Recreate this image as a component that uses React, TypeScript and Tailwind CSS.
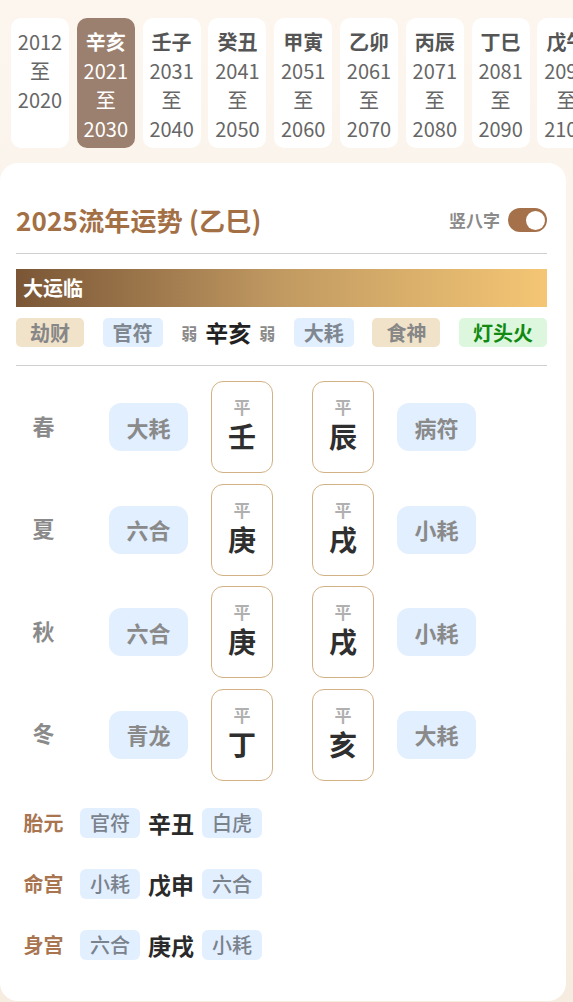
import React from 'react';

const tabs = [
  { gz: '', from: '2012', to: '2020' },
  { gz: '辛亥', from: '2021', to: '2030', active: true },
  { gz: '壬子', from: '2031', to: '2040' },
  { gz: '癸丑', from: '2041', to: '2050' },
  { gz: '甲寅', from: '2051', to: '2060' },
  { gz: '乙卯', from: '2061', to: '2070' },
  { gz: '丙辰', from: '2071', to: '2080' },
  { gz: '丁巳', from: '2081', to: '2090' },
  { gz: '戊午', from: '2091', to: '2100' },
];

const seasons = [
  { name: '春', left: '大耗', a: '壬', b: '辰', right: '病符' },
  { name: '夏', left: '六合', a: '庚', b: '戌', right: '小耗' },
  { name: '秋', left: '六合', a: '庚', b: '戌', right: '小耗' },
  { name: '冬', left: '青龙', a: '丁', b: '亥', right: '大耗' },
];

const palaces = [
  { name: '胎元', left: '官符', gz: '辛丑', right: '白虎' },
  { name: '命宫', left: '小耗', gz: '戊申', right: '六合' },
  { name: '身宫', left: '六合', gz: '庚戌', right: '小耗' },
];

function PillarCard({ ch }: { ch: string }) {
  return (
    <div className="w-[62px] h-[92px] shrink-0 rounded-[12px] border border-[#d2b184] bg-white flex flex-col items-center pt-[15px]">
      <div className="text-[17px] leading-[20px] font-bold text-[#b0b0b0]">平</div>
      <div className="text-[28px] leading-[36px] font-bold text-[#2f2f2f] mt-[1px]">{ch}</div>
    </div>
  );
}

function BigTag({ text }: { text: string }) {
  return (
    <div className="w-[79px] h-[48px] shrink-0 rounded-[12px] bg-[#e2efff] flex items-center justify-center text-[22px] font-bold text-[#8a8a8a]">
      {text}
    </div>
  );
}

function SmallTag({ text }: { text: string }) {
  return (
    <div className="h-[30px] px-[10px] rounded-[6px] bg-[#e2efff] flex items-center text-[20px] font-medium text-[#7a828c]">
      {text}
    </div>
  );
}

export default function App() {
  return (
    <div className="min-h-screen bg-gradient-to-b from-[#fcf6ef] to-[#f6ece0] font-['Noto_Sans_CJK_SC','Noto_Sans',sans-serif] overflow-hidden">
      <div className="flex gap-[7.8px] pl-[11px] pt-[18px] overflow-hidden">
        {tabs.map((t, i) => (
          <div
            key={i}
            className={`w-[58px] h-[130px] shrink-0 rounded-[10px] flex flex-col items-center pt-[9px] text-[20px] leading-[29px] ${
              t.active ? 'bg-[#9b7f6f] text-white' : 'bg-white text-[#666]'
            }`}
          >
            {t.gz && (
              <div className={`font-bold ${t.active ? 'text-white' : 'text-[#555]'}`}>{t.gz}</div>
            )}
            <div>{t.from}</div>
            <div>至</div>
            <div>{t.to}</div>
          </div>
        ))}
      </div>

      <div className="w-[566px] mt-[15px] bg-white rounded-[18px] pl-[16px] pr-[19px] pt-[41px] pb-[41px]">
        <div className="h-[32px] flex items-center justify-between">
          <div className="text-[26px] leading-[32px] font-bold text-[#a36f45] tracking-[0.2px]">2025流年运势 (乙巳)</div>
          <div className="flex items-center gap-[8px]">
            <span className="text-[17px] font-bold text-[#8a8a8a]">竖八字</span>
            <div className="w-[39px] h-[24px] rounded-full bg-[#a5714a] flex items-center justify-end pr-[2px]">
              <div className="w-[19px] h-[19px] rounded-full bg-white" />
            </div>
          </div>
        </div>

        <div className="mt-[17px] border-t border-[#cfcfcf]" />

        <div className="mt-[15px] h-[38px] bg-gradient-to-r from-[#7a5636] via-[#c19a62] to-[#f4c674] flex items-center pl-[7px]">
          <span className="text-[20px] font-bold text-white">大运临</span>
        </div>

        <div className="mt-[11px] h-[29px] flex items-center justify-between">
          <div className="h-[29px] px-[14px] rounded-[5px] bg-[#f1e3ca] flex items-center text-[20px] font-bold text-[#878787]">劫财</div>
          <div className="h-[29px] px-[10px] rounded-[5px] bg-[#e2efff] flex items-center text-[20px] font-bold text-[#7f8790]">官符</div>
          <div className="flex items-center gap-[8px]">
            <span className="text-[16px] font-bold text-[#8a8a8a]">弱</span>
            <span className="text-[23px] font-bold text-[#222]">辛亥</span>
            <span className="text-[16px] font-bold text-[#8a8a8a]">弱</span>
          </div>
          <div className="h-[29px] px-[10px] rounded-[5px] bg-[#e2efff] flex items-center text-[20px] font-bold text-[#7f8790]">大耗</div>
          <div className="h-[29px] px-[14px] rounded-[5px] bg-[#f1e3ca] flex items-center text-[20px] font-bold text-[#878787]">食神</div>
          <div className="h-[29px] px-[14px] rounded-[5px] bg-[#dcf7de] flex items-center text-[20px] font-bold text-[#128a12]">灯头火</div>
        </div>

        <div className="mt-[18px] border-t border-[#cfcfcf]" />

        <div className="mt-[15px] flex flex-col gap-[10.5px]">
          {seasons.map((s) => (
            <div key={s.name} className="flex items-center">
              <div className="w-[55px] text-center text-[22px] font-bold text-[#8a8a8a] -mt-[4px]">{s.name}</div>
              <div className="ml-[38px]"><BigTag text={s.left} /></div>
              <div className="ml-[23px]"><PillarCard ch={s.a} /></div>
              <div className="ml-[39px]"><PillarCard ch={s.b} /></div>
              <div className="ml-[23px]"><BigTag text={s.right} /></div>
            </div>
          ))}
        </div>

        <div className="mt-[27.5px] flex flex-col gap-[31px]">
          {palaces.map((p) => (
            <div key={p.name} className="h-[30px] flex items-center gap-[8px]">
              <div className="w-[55px] text-center text-[20px] font-bold text-[#a87550]">{p.name}</div>
              <div className="ml-[1px]"><SmallTag text={p.left} /></div>
              <div className="text-[23px] font-bold text-[#2a2a2a]">{p.gz}</div>
              <SmallTag text={p.right} />
            </div>
          ))}
        </div>
      </div>
    </div>
  );
}
